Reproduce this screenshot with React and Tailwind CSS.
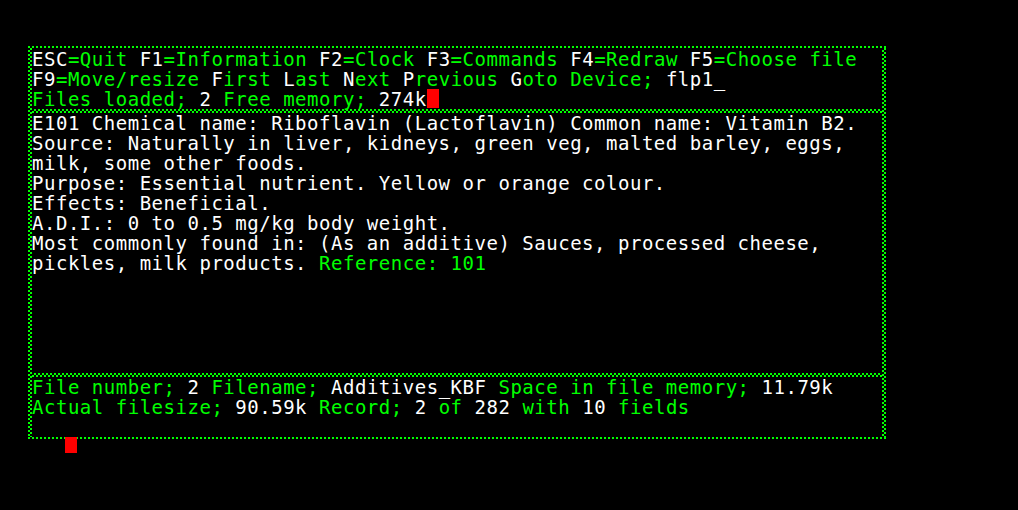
import React from "react";

const G = ({ children }) => <span className="text-[#00ff00]">{children}</span>;
const W = ({ children }) => <span className="text-white">{children}</span>;

const checkerV = "w-[4px] [background-image:repeating-conic-gradient(#00ff00_0_25%,transparent_0_50%)] [background-size:4px_4px]";
const checkerH = "h-[4px] [background-image:repeating-conic-gradient(#00ff00_0_25%,transparent_0_50%)] [background-size:4px_4px]";
const dotted = "h-[2px] [background-image:repeating-linear-gradient(90deg,#00ff00_0_2px,transparent_2px_4px)]";

export default function App() {
  return (
    <div
      className="w-[1018px] h-[510px] bg-black pt-[46px] pl-[28px] overflow-hidden text-[19px] leading-[20px] tracking-[0.52px] whitespace-pre"
      style={{ fontFamily: '"DejaVu Sans Mono", "Liberation Mono", monospace' }}
    >
      <div className="w-[858px] flex flex-col">
        <div className={dotted} />
        <div className="flex h-[389px]">
          <div className={checkerV} />
          <div className="flex-1 flex flex-col">
            <div className="h-[61px] pt-[1px]">
              <div>
                <W>ESC</W><G>=Quit </G><W>F1</W><G>=Information </G><W>F2</W><G>=Clock </G>
                <W>F3</W><G>=Commands </G><W>F4</W><G>=Redraw </G><W>F5</W><G>=Choose file</G>
              </div>
              <div>
                <W>F9</W><G>=Move/resize </G><W>F</W><G>irst </G><W>L</W><G>ast </G><W>N</W>
                <G>ext </G><W>P</W><G>revious </G><W>G</W><G>oto </G><G>Device; </G><W>flp1_</W>
              </div>
              <div className="flex items-start">
                <span>
                  <G>Files loaded; </G><W>2</W><G> Free memory; </G><W>274k</W>
                </span>
                <span className="inline-block w-[12px] h-[19px] bg-[#ff0000]" />
              </div>
            </div>
            <div className={checkerH} />
            <div className="h-[260px] text-white">
              <div>E101 Chemical name: Riboflavin (Lactoflavin) Common name: Vitamin B2.</div>
              <div>Source: Naturally in liver, kidneys, green veg, malted barley, eggs,</div>
              <div>milk, some other foods.</div>
              <div>Purpose: Essential nutrient. Yellow or orange colour.</div>
              <div>Effects: Beneficial.</div>
              <div>A.D.I.: 0 to 0.5 mg/kg body weight.</div>
              <div>Most commonly found in: (As an additive) Sauces, processed cheese,</div>
              <div>
                pickles, milk products. <G>Reference: 101</G>
              </div>
            </div>
            <div className={checkerH} />
            <div className="flex-1">
              <div>
                <G>File number; </G><W>2</W><G> Filename; </G><W>Additives_KBF</W>
                <G> Space in file memory; </G><W>11.79k</W>
              </div>
              <div>
                <G>Actual filesize; </G><W>90.59k</W><G> Record; </G><W>2</W><G> of </G>
                <W>282</W><G> with </G><W>10</W><G> fields</G>
              </div>
            </div>
          </div>
          <div className={checkerV} />
        </div>
        <div className={dotted} />
      </div>
      <div className="relative -mt-[2px] ml-[37px] w-[12px] h-[16px] bg-[#ff0000]" />
    </div>
  );
}
